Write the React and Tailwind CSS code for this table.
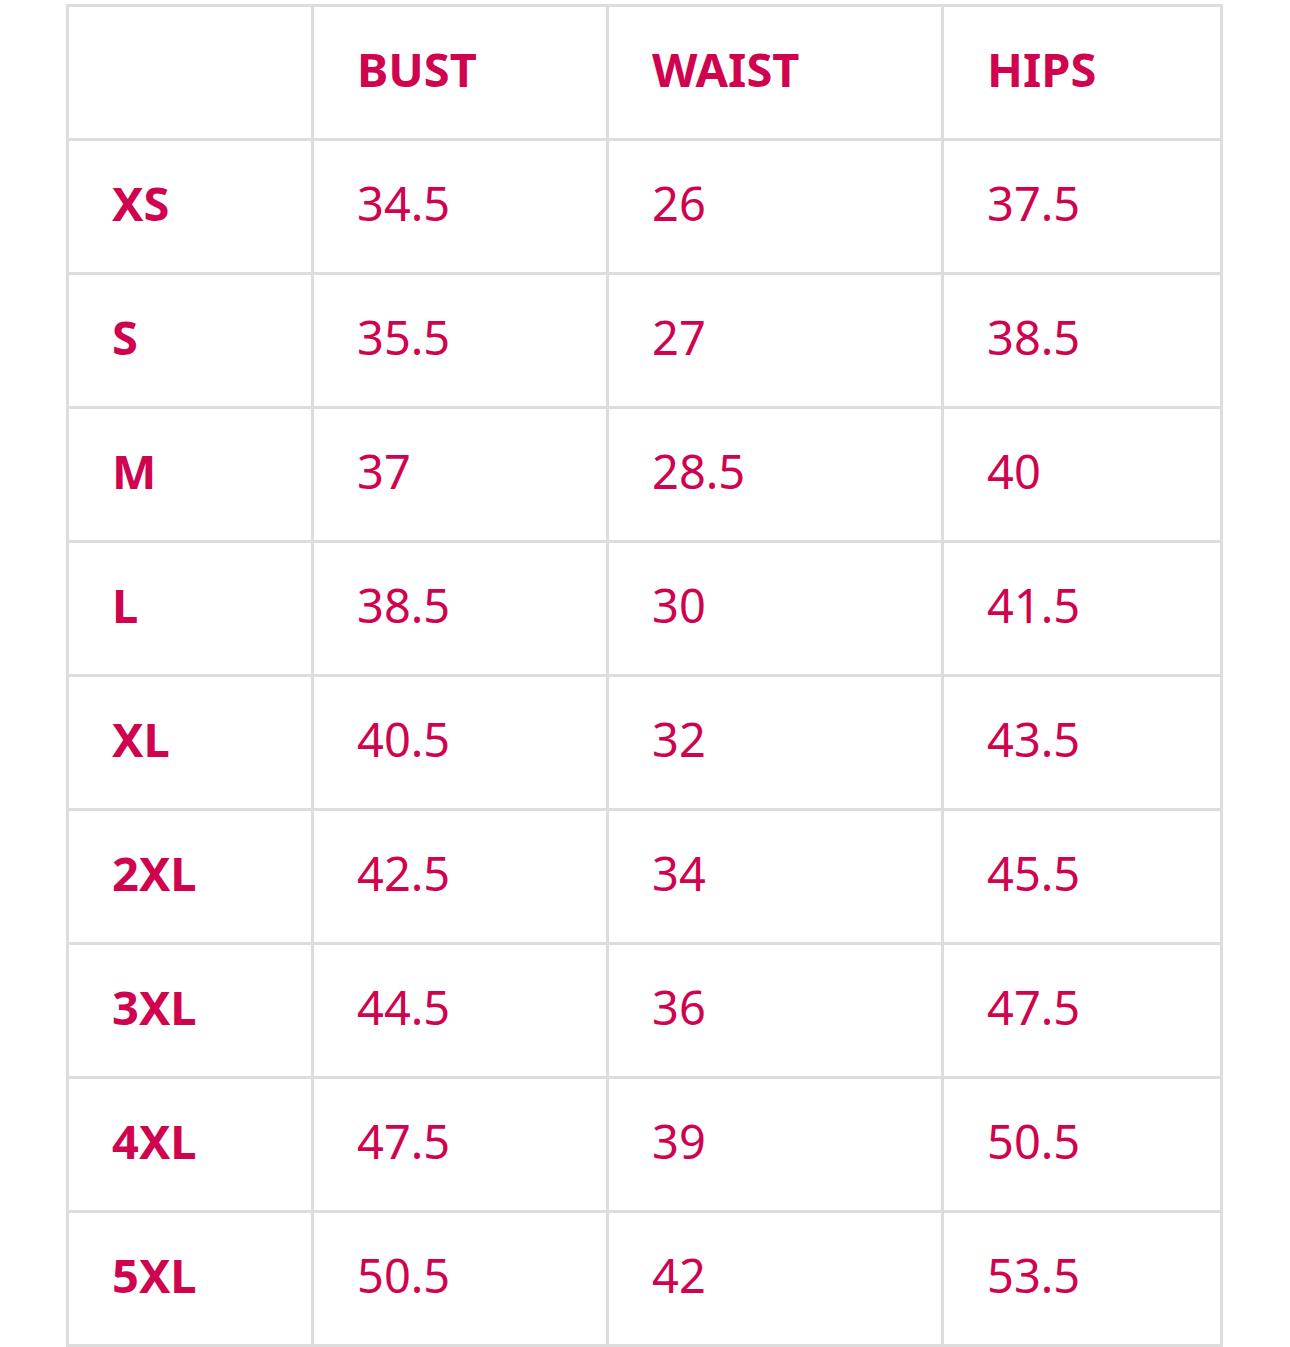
import React from 'react';

const headers = ['', 'BUST', 'WAIST', 'HIPS'];

const rows = [
  ['XS', '34.5', '26', '37.5'],
  ['S', '35.5', '27', '38.5'],
  ['M', '37', '28.5', '40'],
  ['L', '38.5', '30', '41.5'],
  ['XL', '40.5', '32', '43.5'],
  ['2XL', '42.5', '34', '45.5'],
  ['3XL', '44.5', '36', '47.5'],
  ['4XL', '47.5', '39', '50.5'],
  ['5XL', '50.5', '42', '53.5'],
];

const Cell = ({ children, bold }) => (
  <div
    className={`bg-white flex items-center pl-[43px] pb-[7px] text-[47px] leading-none text-[#d0034f] ${
      bold ? 'font-bold' : 'font-normal'
    }`}
  >
    {children}
  </div>
);

const App = () => {
  return (
    <div
      className="min-h-[1347px] bg-white pt-[4px]"
      style={{ fontFamily: '"Noto Sans", "Open Sans", sans-serif' }}
    >
      <div className="ml-[66px] w-[1157px] grid grid-cols-[242px_292px_332px_276px] auto-rows-[131px] gap-[3px] p-[3px] bg-[#dddddd]">
        {/* header row */}
        {headers.map((h, i) => (
          <Cell key={`h-${i}`} bold>
            {h}
          </Cell>
        ))}

        {/* size rows */}
        {rows.map((row) =>
          row.map((val, j) => (
            <Cell key={`${row[0]}-${j}`} bold={j === 0}>
              {val}
            </Cell>
          ))
        )}
      </div>
    </div>
  );
};

export default App;
